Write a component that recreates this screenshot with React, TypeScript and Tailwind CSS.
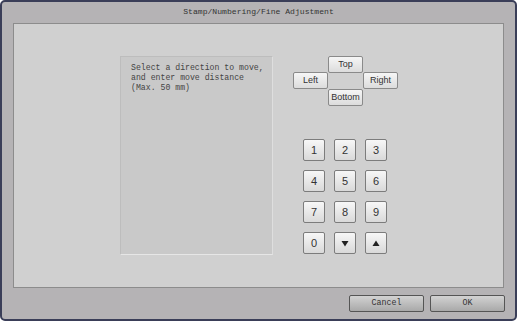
import React from "react";

const mono = { fontFamily: '"Liberation Mono", "DejaVu Sans Mono", monospace' };
const sans = { fontFamily: '"Liberation Sans", Arial, sans-serif' };

const dirBtn =
  "flex items-center justify-center border border-[#8a8a8a] rounded-[2px] bg-gradient-to-b from-[#f6f6f6] to-[#dcdcdc] text-[9px] text-[#333]";

const keyBtn =
  "flex items-center justify-center w-[22px] h-[22px] border border-[#7c7c7c] rounded-[2px] bg-gradient-to-b from-[#f7f7f7] to-[#d9d9d9] text-[11px] text-[#333]";

const footBtn =
  "flex items-center justify-center w-[75px] h-[17px] border border-[#555] rounded-[2px] bg-gradient-to-b from-[#d2d2d2] to-[#a9a9a9] text-[8.3px] text-[#333]";

export default function App() {
  const keys = ["1", "2", "3", "4", "5", "6", "7", "8", "9", "0"];

  return (
    <div className="w-[517px] h-[321px] bg-[#b5b3b5] border-2 border-[#3a3e58] rounded-[5px] flex flex-col overflow-hidden">
      <div className="h-[21px] flex items-center justify-center whitespace-nowrap text-[8.1px] text-[#333]" style={mono}>
        Stamp/Numbering/Fine Adjustment
      </div>
      <div className="ml-[11px] w-[491px] h-[265px] bg-[#d0d0d0] border border-[#8c8c8c] flex pl-[106px] pt-[32px]">
        <div
          className="w-[153px] h-[199px] whitespace-nowrap bg-[#c9c9c9] border-l border-t border-[#bdbdbd] border-r-[#dedede] border-b-[#e6e6e6] border-r border-b pl-[10px] pt-[6px] text-[8.2px] leading-[10px] text-[#444]"
          style={mono}
        >
          Select a direction to move,
          <br />
          and enter move distance
          <br />
          (Max. 50 mm)
        </div>
        <div className="ml-[20px] flex flex-col">
          <div className="grid grid-cols-[35px_35px_35px] grid-rows-[17px_16px_17px]" style={sans}>
            <div />
            <div className={dirBtn}>Top</div>
            <div />
            <div className={`${dirBtn} row-start-2 col-start-1 -mt-[1px] h-[17px]`}>Left</div>
            <div className="row-start-2 col-start-2" />
            <div className={`${dirBtn} row-start-2 col-start-3 -mt-[1px] h-[17px]`}>Right</div>
            <div className={`${dirBtn} row-start-3 col-start-2`}>Bottom</div>
          </div>
          <div className="mt-[33px] ml-[10px] grid grid-cols-[22px_22px_22px] gap-x-[9px] gap-y-[9px]" style={sans}>
            {keys.map((k) => (
              <div key={k} className={keyBtn}>
                {k}
              </div>
            ))}
            <div className={keyBtn}>
              <svg width="8" height="7" viewBox="0 0 8 7">
                <path d="M0.5 1 L7.5 1 L4 6.5 Z" fill="#222" />
              </svg>
            </div>
            <div className={keyBtn}>
              <svg width="8" height="7" viewBox="0 0 8 7">
                <path d="M0.5 6 L7.5 6 L4 0.5 Z" fill="#222" />
              </svg>
            </div>
          </div>
        </div>
      </div>
      <div className="flex justify-end gap-[6px] pr-[10px] pt-[7px]" style={mono}>
        <div className={footBtn}>Cancel</div>
        <div className={footBtn}>OK</div>
      </div>
    </div>
  );
}
